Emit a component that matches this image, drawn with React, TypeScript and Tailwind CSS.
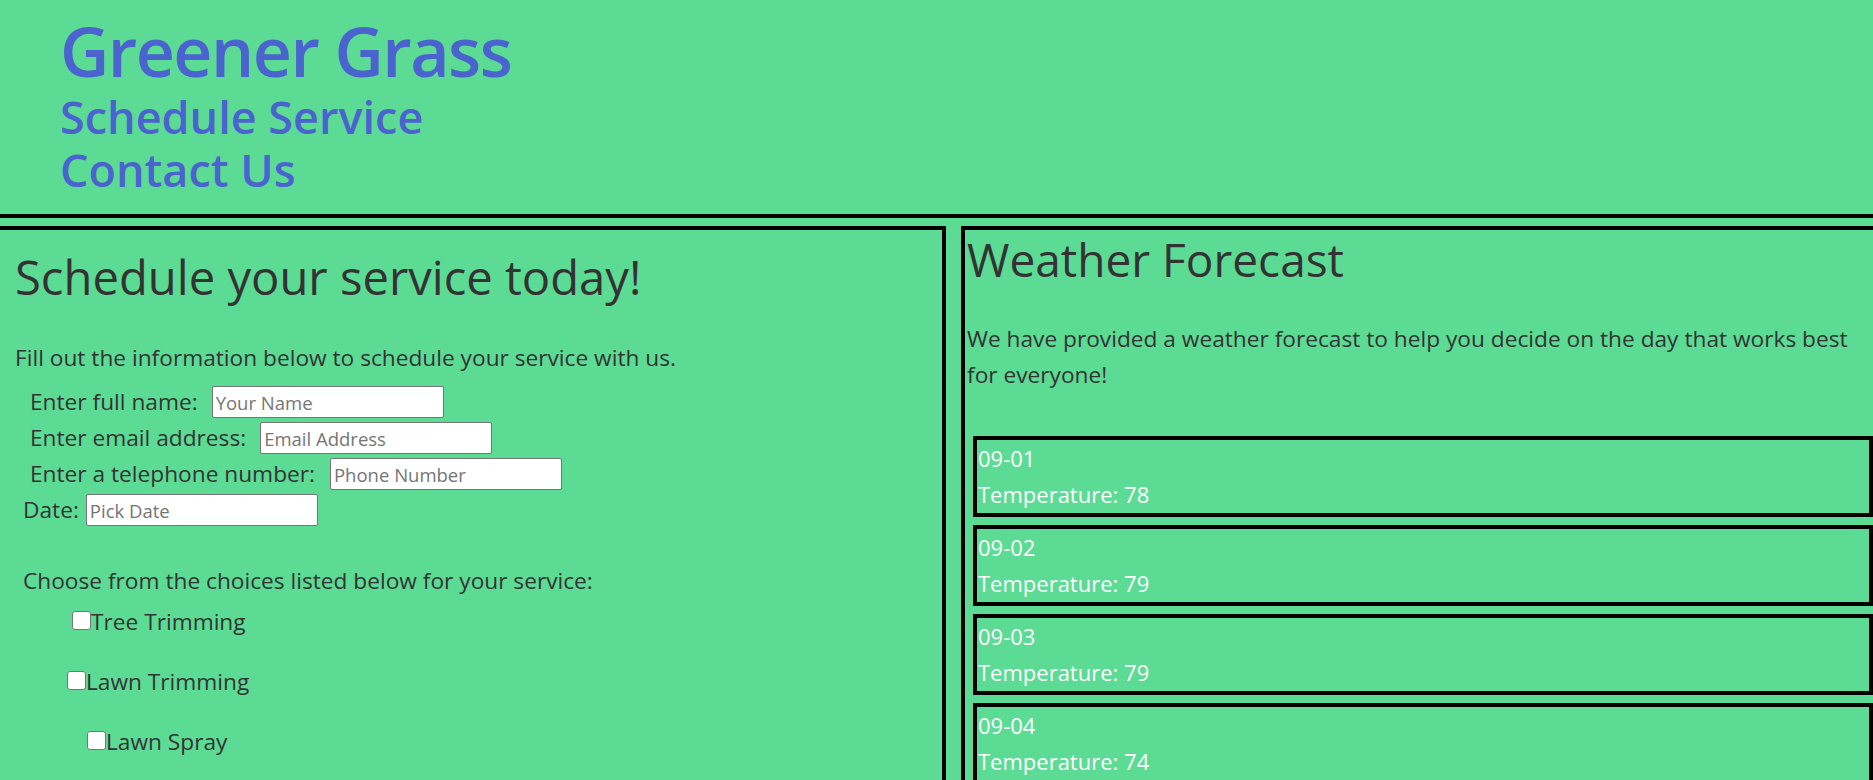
import React from "react";

const fields = [
  { label: "Enter full name:", placeholder: "Your Name", indent: "pl-[15px]", gap: "ml-[14px]" },
  { label: "Enter email address:", placeholder: "Email Address", indent: "pl-[15px]", gap: "ml-[14px]" },
  { label: "Enter a telephone number:", placeholder: "Phone Number", indent: "pl-[15px]", gap: "ml-[15px]" },
  { label: "Date:", placeholder: "Pick Date", indent: "pl-[8px]", gap: "ml-[7px]" },
];

const services = [
  { name: "Tree Trimming", indent: "pl-[57px]" },
  { name: "Lawn Trimming", indent: "pl-[52px]" },
  { name: "Lawn Spray", indent: "pl-[72px]" },
];

const forecast = [
  { day: "09-01", temp: 78 },
  { day: "09-02", temp: 79 },
  { day: "09-03", temp: 79 },
  { day: "09-04", temp: 74 },
];

const Header = () => {
  return (
    <header className="pl-[60px] pt-[12px] pb-[18px] border-b-4 border-black">
      <h1 className="text-[68px] leading-[78px] font-semibold tracking-[-1.5px] text-[#4b63cf]">Greener Grass</h1>
      <a href="#schedule" className="block text-[45px] leading-[53px] font-semibold text-[#4b63cf]">Schedule Service</a>
      <a href="#contact" className="block text-[45px] leading-[53px] font-semibold text-[#4b63cf]">Contact Us</a>
    </header>
  );
};

const ScheduleForm = () => {
  return (
    <section id="schedule" className="w-[946px] shrink-0 border-t-4 border-r-4 border-black pl-[15px]">
      <h2 className="mt-[19px] text-[47.2px] leading-[56px] text-[#333]">Schedule your service today!</h2>
      <p className="mt-[35px] text-[22.7px] leading-[36px] text-[#333]">
        Fill out the information below to schedule your service with us.
      </p>

      <form className="mt-[8px]">
        {fields.map((f) => (
          <div key={f.label} className={`flex h-[36px] items-center ${f.indent}`}>
            <label className="text-[22.7px] text-[#333]">{f.label}</label>
            <input
              type="text"
              placeholder={f.placeholder}
              className={`${f.gap} h-[32px] w-[232px] rounded-[2px] border border-[#767676] bg-white px-[3px] text-[18.5px] text-[#333] outline-none placeholder:text-[#757575]`}
            />
          </div>
        ))}

        <p className="mt-[35px] pl-[8px] text-[22.7px] leading-[36px] text-[#333]">
          Choose from the choices listed below for your service:
        </p>

        <div className="mt-[5px] flex flex-col gap-[24px]">
          {services.map((s) => (
            <label key={s.name} className={`flex h-[36px] items-center text-[22.7px] text-[#333] ${s.indent}`}>
              <input
                type="checkbox"
                className="mb-[3px] h-[19px] w-[19px] shrink-0 appearance-none rounded-[3px] border border-[#767676] bg-white"
              />
              {s.name}
            </label>
          ))}
        </div>
      </form>
    </section>
  );
};

const Weather = () => {
  return (
    <section className="flex-1 border-t-4 border-l-4 border-black pl-[2px]">
      <h2 className="mt-[1px] text-[46px] leading-[56px] text-[#333]">Weather Forecast</h2>
      <p className="mt-[34px] pr-[10px] text-[22.7px] leading-[36px] text-[#333]">
        We have provided a weather forecast to help you decide on the day that works best for everyone!
      </p>

      <div className="mt-[43px] ml-[6px] flex flex-col gap-[8px]">
        {forecast.map((d) => (
          <div key={d.day} className="h-[81px] border-4 border-black pl-[1px] text-[22px] leading-[36px] text-white">
            <div>{d.day}</div>
            <div>Temperature: {d.temp}</div>
          </div>
        ))}
      </div>
    </section>
  );
};

export default function App() {
  return (
    <div className="h-screen overflow-hidden bg-[#5cdb95] font-['Open_Sans',sans-serif]">
      <Header />
      <main className="mt-[8px] flex gap-[15px]">
        <ScheduleForm />
        <Weather />
      </main>
    </div>
  );
}
